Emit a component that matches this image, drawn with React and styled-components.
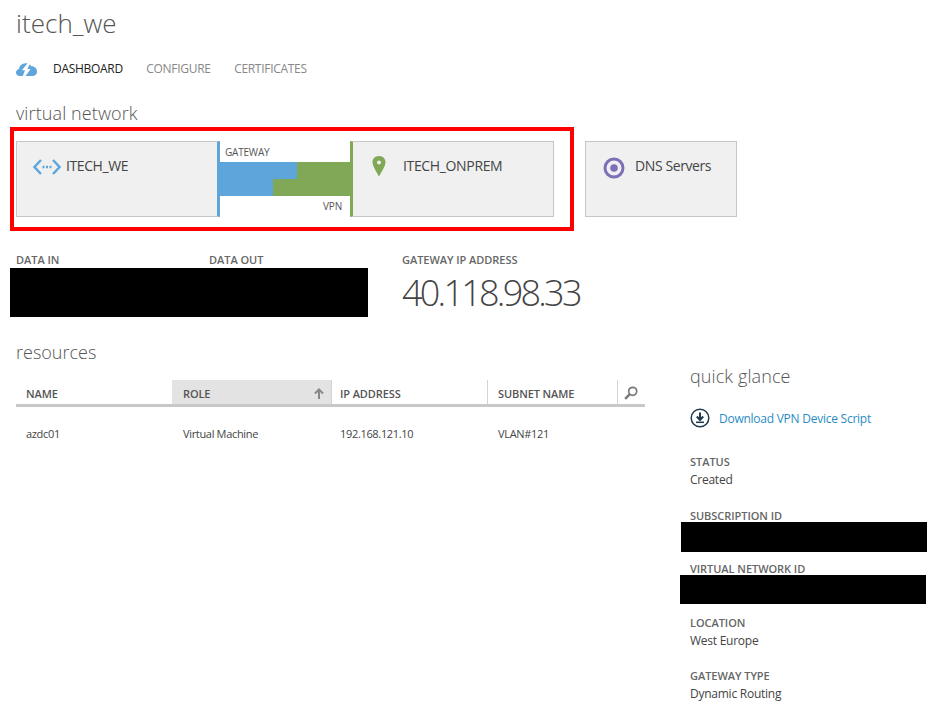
import React from "react";
import styled, { createGlobalStyle } from "styled-components";

const Global = createGlobalStyle`
  html, body { margin: 0; padding: 0; background: #fff; }
  body { font-family: "Open Sans", "Noto Sans", "Liberation Sans", sans-serif; color: #444; overflow: hidden; }
`;

const Page = styled.div`
  width: 940px;
  height: 725px;
  box-sizing: border-box;
  padding-left: 16px;
  overflow: hidden;
`;
const Title = styled.h1`
  margin: 0;
  height: 46px;
  font-size: 26px;
  line-height: 46px;
  font-weight: 300;
  color: #555;
  letter-spacing: 0.05px;
`;
const Nav = styled.nav`
  display: flex;
  align-items: center;
  height: 20px;
  margin-top: 13px;
`;
const Logo = styled.svg`
  width: 21px;
  height: 13px;
  margin-right: 16px;
`;
const NavItem = styled.a`
  font-size: 12px;
  line-height: 20px;
  letter-spacing: -0.3px;
  margin-right: 23.5px;
  color: ${(p) => (p.$active ? "#222" : "#888")};
`;
const SectionTitle = styled.h2`
  margin: 0;
  font-size: 18px;
  line-height: 26px;
  font-weight: 300;
  color: #555;
  letter-spacing: ${(p) => p.$spacing || "0"};
`;
const NetworkHeading = styled(SectionTitle)`
  margin-top: 21px;
`;
const DiagramRow = styled.div`
  display: flex;
  align-items: center;
  margin-top: 1px;
  margin-left: -6px;
`;
const Highlight = styled.div`
  box-sizing: border-box;
  width: 564px;
  height: 104px;
  border: 4px solid #ff0000;
  padding: 10px 16px 10px 2px;
  display: flex;
`;
const Tile = styled.div`
  box-sizing: border-box;
  width: ${(p) => p.$w}px;
  height: 76px;
  display: flex;
  align-items: flex-start;
  background: #f0f0f0;
  border: 1px solid #c6c6c6;
  ${(p) => p.$accentRight && `border-right: 3px solid ${p.$accentRight};`}
  ${(p) => p.$accentLeft && `border-left: 3px solid ${p.$accentLeft};`}
  padding: 14px 0 0 ${(p) => p.$pad}px;
`;
const TileLabel = styled.span`
  font-size: 14px;
  line-height: 20px;
  color: #444;
  letter-spacing: ${(p) => p.$spacing || "-0.4px"};
  margin-left: ${(p) => p.$gap}px;
`;
const TileIcon = styled.svg`
  flex: none;
  width: ${(p) => p.$w}px;
  height: ${(p) => p.$h}px;
  margin-top: ${(p) => p.$top}px;
`;
const Link = styled.div`
  box-sizing: border-box;
  width: 130px;
  height: 76px;
  display: flex;
  flex-direction: column;
`;
const LinkLabel = styled.div`
  height: 21px;
  font-size: 10px;
  line-height: ${(p) => (p.$end ? "21px" : "23px")};
  letter-spacing: -0.2px;
  color: #555;
  padding: 0 8px 0 5px;
  text-align: ${(p) => (p.$end ? "right" : "left")};
`;
const Bar = styled.div`
  height: 17px;
  background: linear-gradient(to right, #5ea5dc ${(p) => p.$split}px, #80a857 ${(p) => p.$split}px);
`;
const DnsTile = styled(Tile)`
  margin-left: 11px;
`;
const Stats = styled.div`
  display: grid;
  grid-template-columns: 193px 193px auto;
  grid-template-rows: 17px 49px;
  margin-top: 20px;
`;
const Label = styled.div`
  font-size: 11px;
  line-height: 18px;
  font-weight: 600;
  letter-spacing: -0.05px;
  color: #666;
`;
const RedactedStats = styled.div`
  grid-column: 1 / 3;
  grid-row: 2;
  width: 358px;
  margin-left: -6px;
  background: #000;
`;
const BigValue = styled.div`
  grid-column: 3;
  grid-row: 2;
  font-size: 36px;
  line-height: 49px;
  font-weight: 300;
  color: #444;
  letter-spacing: -2.75px;
`;
const Lower = styled.div`
  display: flex;
  margin-top: 22px;
`;
const Resources = styled.section`
  width: 629px;
`;
const Table = styled.div`
  margin-top: 15px;
`;
const HeadRow = styled.div`
  display: grid;
  grid-template-columns: 156px 160px 156px 130px 27px;
  height: 24px;
  border-bottom: 3px solid #c8c8c8;
`;
const HeadCell = styled.div`
  display: flex;
  align-items: center;
  justify-content: space-between;
  box-sizing: border-box;
  padding: 2px 7px 0 ${(p) => p.$pad || 11}px;
  font-size: 11px;
  font-weight: 600;
  letter-spacing: -0.1px;
  color: #555;
  background: ${(p) => (p.$active ? "#e3e3e3" : "transparent")};
  border-right: ${(p) => (p.$line ? "1px solid #d4d4d4" : "0")};
`;
const BodyRow = styled.div`
  display: grid;
  grid-template-columns: 156px 160px 156px 130px 27px;
  margin-top: 17px;
`;
const BodyCell = styled.div`
  padding-left: ${(p) => p.$pad || 11}px;
  font-size: 11px;
  line-height: 20px;
  letter-spacing: -0.33px;
  color: #444;
`;
const Glance = styled.aside`
  margin-left: 45px;
  padding-top: 24px;
  width: 240px;
`;
const DownloadLink = styled.a`
  display: flex;
  align-items: center;
  height: 22px;
  margin-top: 18px;
  font-size: 12px;
  letter-spacing: -0.25px;
  color: #2a8cc4;
`;
const DownloadIcon = styled.svg`
  width: 20px;
  height: 20px;
  margin-right: 9px;
`;
const FieldList = styled.div`
  margin-top: 24px;
`;
const Field = styled.div`
  height: 53.5px;
`;
const FieldValue = styled.div`
  font-size: 12px;
  line-height: 18px;
  letter-spacing: -0.25px;
  color: #444;
`;
const RedactedField = styled.div`
  width: 246px;
  height: ${(p) => p.$h}px;
  margin-top: ${(p) => p.$top}px;
  margin-left: ${(p) => p.$left}px;
  background: #000;
`;

const fields = [
  { label: "STATUS", value: "Created" },
  { label: "SUBSCRIPTION ID", redact: { h: 30, top: -3, left: -9 } },
  { label: "VIRTUAL NETWORK ID", redact: { h: 29, top: -3, left: -10 } },
  { label: "LOCATION", value: "West Europe" },
  { label: "GATEWAY TYPE", value: "Dynamic Routing" },
];

export default function App() {
  return (
    <Page>
      <Global />
      <Title>itech_we</Title>
      <Nav>
        <Logo viewBox="0 0 21 13">
          <path d="M4 13C1.600 13 0 11.500 0 9.500 0 7.600 1.300 6.300 3 6 3.400 2.800 6 .4 9.400.2 12 0 14.200 1.200 15.400 3.200 18.600 3.200 21 5.500 21 8.400 21 11.200 18.900 13 16 13Z" fill="#5ea5dc" />
          <path d="M11.800 0 5.800 7.200H9L6.800 13 9.600 13 14.600 6H11.300L14.200 .5Z" fill="#fff" />
        </Logo>
        <NavItem $active>DASHBOARD</NavItem>
        <NavItem>CONFIGURE</NavItem>
        <NavItem>CERTIFICATES</NavItem>
      </Nav>
      <NetworkHeading $spacing="0.1px">virtual network</NetworkHeading>
      <DiagramRow>
        <Highlight>
          <Tile $w={204} $pad={16} $accentRight="#5ea5dc">
            <TileIcon $w={28} $h={18} $top={2} viewBox="0 0 28 18" fill="none">
              <path d="M8 2 1.500 9 8 16M20 2l6.500 7L20 16" stroke="#5ea5dc" strokeWidth="2.400" />
              <path d="M9.500 9h2M13 9h2M16.500 9h2" stroke="#5ea5dc" strokeWidth="2.400" />
            </TileIcon>
            <TileLabel $gap={5}>ITECH_WE</TileLabel>
          </Tile>
          <Link>
            <LinkLabel>GATEWAY</LinkLabel>
            <Bar $split={77} />
            <Bar $split={53} />
            <LinkLabel $end>VPN</LinkLabel>
          </Link>
          <Tile $w={204} $pad={19} $accentLeft="#80a857">
            <TileIcon $w={14} $h={21} $top={0} viewBox="0 0 14 21">
              <path fillRule="evenodd" d="M7 0C3 0 .5 2.800.5 6.300.5 10 4.500 16 7 20.500 9.500 16 13.500 10 13.500 6.300 13.500 2.800 11 0 7 0ZM7 4.500A2 2 0 1 1 7 8.500 2 2 0 1 1 7 4.500Z" fill="#80a857" />
            </TileIcon>
            <TileLabel $gap={17} $spacing="-0.35px">ITECH_ONPREM</TileLabel>
          </Tile>
        </Highlight>
        <DnsTile $w={152} $pad={17}>
          <TileIcon $w={22} $h={22} $top={1} viewBox="0 0 22 22" fill="none">
            <circle cx="11" cy="11" r="9" stroke="#7f6fb8" strokeWidth="3" />
            <circle cx="11" cy="11" r="3.800" fill="#7f6fb8" />
          </TileIcon>
          <TileLabel $gap={10}>DNS Servers</TileLabel>
        </DnsTile>
      </DiagramRow>
      <Stats>
        <Label>DATA IN</Label>
        <Label>DATA OUT</Label>
        <Label>GATEWAY IP ADDRESS</Label>
        <RedactedStats />
        <BigValue>40.118.98.33</BigValue>
      </Stats>
      <Lower>
        <Resources>
          <SectionTitle>resources</SectionTitle>
          <Table>
            <HeadRow>
              <HeadCell $pad={10}>NAME</HeadCell>
              <HeadCell $active $line>
                ROLE
                <svg width="10" height="11" viewBox="0 0 10 11" fill="none">
                  <path d="M5 11V2M1 5.500 5 1.500 9 5.500" stroke="#888" strokeWidth="2" />
                </svg>
              </HeadCell>
              <HeadCell $pad={8} $line>IP ADDRESS</HeadCell>
              <HeadCell $pad={10} $line>SUBNET NAME</HeadCell>
              <HeadCell $pad={6}>
                <svg width="14" height="14" viewBox="0 0 14 14" fill="none">
                  <circle cx="8.700" cy="5.300" r="4" stroke="#777" strokeWidth="1.700" />
                  <path d="M5.800 8.200 1.200 12.800" stroke="#777" strokeWidth="2.400" />
                </svg>
              </HeadCell>
            </HeadRow>
            <BodyRow>
              <BodyCell $pad={10}>azdc01</BodyCell>
              <BodyCell>Virtual Machine</BodyCell>
              <BodyCell $pad={8}>192.168.121.10</BodyCell>
              <BodyCell $pad={10}>VLAN#121</BodyCell>
            </BodyRow>
          </Table>
        </Resources>
        <Glance>
          <SectionTitle $spacing="0.1px">quick glance</SectionTitle>
          <DownloadLink>
            <DownloadIcon viewBox="0 0 20 20" fill="none">
              <circle cx="10" cy="10" r="8.800" stroke="#1f3a4d" strokeWidth="1.500" />
              <path d="M10 4.500V11M6.800 8.500 10 12l3.200-3.500" stroke="#1f3a4d" strokeWidth="2" />
              <path d="M6 14.300h8" stroke="#1f3a4d" strokeWidth="1.500" />
            </DownloadIcon>
            Download VPN Device Script
          </DownloadLink>
          <FieldList>
            {fields.map((f) => (
              <Field key={f.label}>
                <Label>{f.label}</Label>
                {f.value && <FieldValue>{f.value}</FieldValue>}
                {f.redact && <RedactedField $h={f.redact.h} $top={f.redact.top} $left={f.redact.left} />}
              </Field>
            ))}
          </FieldList>
        </Glance>
      </Lower>
    </Page>
  );
}
